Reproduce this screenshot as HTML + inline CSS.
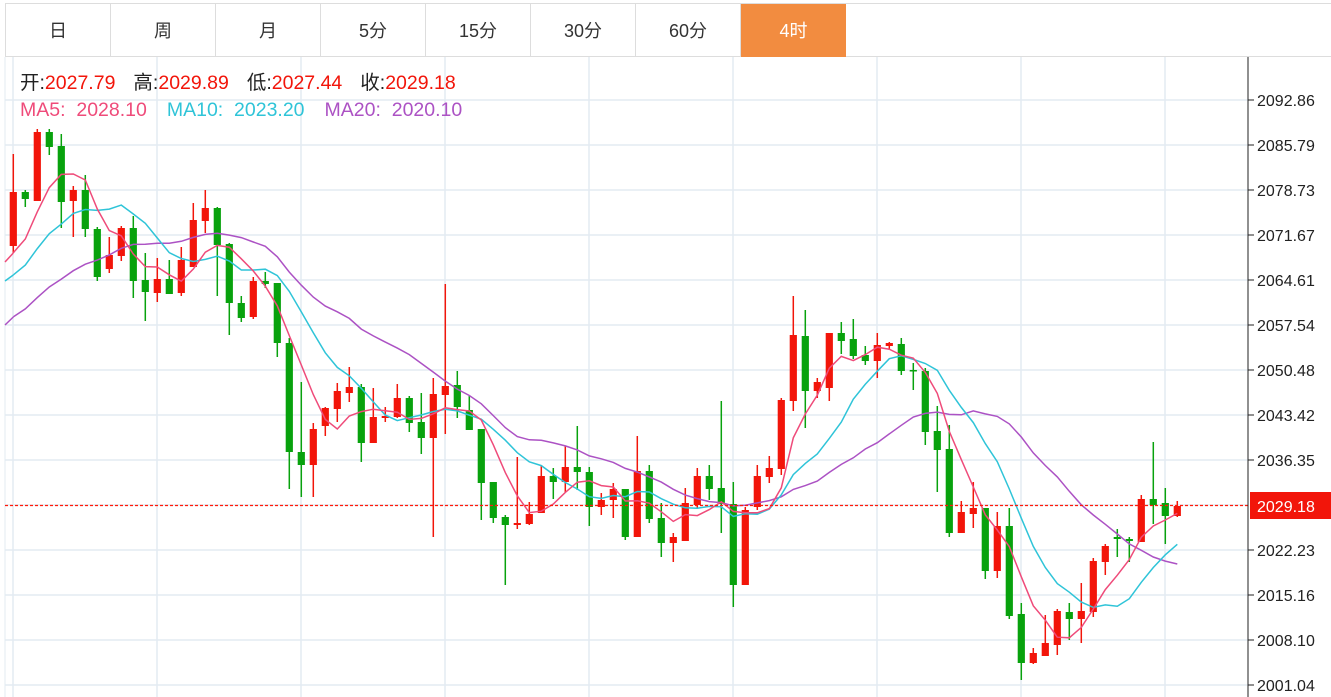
<!DOCTYPE html>
<html><head><meta charset="utf-8">
<style>
body{margin:0;background:#fff;width:1331px;height:697px;overflow:hidden;font-family:"Liberation Sans","Noto Sans CJK SC",sans-serif;}
.tabs{position:absolute;left:5px;top:3px;height:54px;width:1326px;border-top:1px solid #ddd;border-bottom:1px solid #ddd;border-left:1px solid #ddd;box-sizing:border-box;}
.tab{position:absolute;top:0;height:53px;width:105px;border-right:1px solid #ddd;box-sizing:border-box;text-align:center;line-height:54px;font-size:18px;color:#333;}
.tab.on{background:#f28c40;color:#fff;border-right:none}
</style></head><body>
<div class="tabs">
<div class="tab" style="left:0">日</div>
<div class="tab" style="left:105px">周</div>
<div class="tab" style="left:210px">月</div>
<div class="tab" style="left:315px">5分</div>
<div class="tab" style="left:420px">15分</div>
<div class="tab" style="left:525px">30分</div>
<div class="tab" style="left:630px">60分</div>
<div class="tab on" style="left:735px;top:0;height:53px">4时</div>
</div>
<svg id="c" width="1331" height="697" style="position:absolute;left:0;top:0" xmlns="http://www.w3.org/2000/svg"></svg>
<script>
var c=[
['r',192,246,154,253],['g',192,199,190,207],['r',132,201,129,201],['g',132,147,129,155],['g',146,202,134,228],
['r',190,201,186,237],['g',190,229,175,237],['g',229,277,227,281],['r',255,269,237,273],['r',228,256,226,261],
['g',228,281,216,298],['g',280,292,253,321],['r',279,293,258,302],['g',279,294,260,294],['r',260,293,247,296],
['r',220,267,203,267],['r',208,221,190,233],['g',208,245,207,296],['g',244,303,243,335],['g',303,318,296,322],
['r',281,317,277,319],['g',281,284,272,288],['g',283,343,283,357],['g',343,452,338,489],['g',452,465,382,497],
['r',429,465,423,497],['r',408,426,407,436],['r',391,409,383,422],['r',387,393,367,402],['g',387,443,384,462],
['r',417,443,388,443],['r',416,418,407,422],['r',398,417,384,418],['g',398,423,396,432],['g',422,438,393,454],
['r',394,438,378,537],['r',386,395,284,434],['g',385,407,371,418],['g',410,430,396,430],['g',429,483,429,520],
['g',482,518,482,523],['g',517,525,515,585],['r',523,525,457,529],['r',514,524,502,525],['r',476,513,465,513],
['g',476,482,468,499],['r',467,482,446,492],['g',467,472,426,490],['g',472,507,467,526],['r',500,507,493,515],
['r',489,500,483,518],['g',489,537,489,540],['r',471,537,436,537],['g',471,519,465,523],['g',518,543,503,557],
['r',537,543,533,562],['r',503,541,488,541],['r',476,505,468,508],['g',476,489,465,500],['g',488,504,401,533],
['g',504,585,482,607],['r',510,585,507,585],['r',476,507,465,510],['r',468,477,456,483],['r',400,469,398,475],
['r',335,401,296,411],['g',336,391,310,428],['r',382,391,378,398],['r',333,388,333,401],['g',333,341,322,354],
['g',339,356,319,359],['g',355,361,346,365],['r',345,361,333,378],['r',343,346,342,350],['g',344,371,338,375],
['g',370,371,363,390],['g',371,432,368,445],['g',431,450,406,492],['g',449,533,425,537],['r',512,533,501,533],
['r',508,514,482,528],['g',508,571,508,579],['r',526,571,512,578],['g',526,616,508,619],['g',614,663,603,680],
['r',653,663,648,664],['r',643,656,615,656],['r',611,645,609,655],['g',612,619,603,640],['r',611,619,583,643],
['r',561,612,558,617],['r',546,562,544,575],['g',537,539,529,557],['g',539,541,537,562],['r',499,542,495,542],
['g',499,505,442,524],['g',503,516,488,544],['r',506,516,501,517]];
var s='';
s+='<rect x="5" y="57" width="1243" height="640" fill="#fff"/>';
[100,145,190,235,280,325,370,415,460,505,550,595,640,685].forEach(function(y){s+='<line x1="5" x2="1248" y1="'+y+'" y2="'+y+'" stroke="#e3ebf2" stroke-width="1.5"/>';});
for(var x=13;x<1248;x+=144)s+='<line x1="'+x+'" x2="'+x+'" y1="57" y2="697" stroke="#e3ebf2" stroke-width="1.5"/>';
s+='<line x1="5" x2="5" y1="57" y2="697" stroke="#e3ebf2" stroke-width="1"/>';
var closes=[];for(var i=0;i<10;i++)closes.push(359);for(i=0;i<5;i++)closes.push(297);for(i=0;i<4;i++)closes.push(268);
c.forEach(function(k){closes.push(k[0]=='r'?k[1]:k[2]);});
function ma(n,col){var p=[];for(var j=19;j<closes.length;j++){var t=0;for(var q=0;q<n;q++)t+=closes[j-q];p.push(((13.3+12*(j-19)).toFixed(1))+','+(t/n).toFixed(1));}
 return '<polyline points="'+p.join(' ')+'" fill="none" stroke="'+col+'" stroke-width="1.5"/>';}
c.forEach(function(k,i){var x=13.3+12*i;var col=k[0]=='r'?'#f2150a':'#08a20d';
 s+='<line x1="'+x+'" x2="'+x+'" y1="'+k[3]+'" y2="'+k[4]+'" stroke="'+col+'" stroke-width="1.5"/>';
 s+='<rect x="'+(x-3.6)+'" y="'+k[1]+'" width="7.2" height="'+Math.max(1.5,k[2]-k[1])+'" fill="'+col+'"/>';});
s+=ma(20,'#ac52c4')+ma(10,'#2fc4d8')+ma(5,'#ef4b7a');
s+='<line x1="5" y1="262" x2="13.3" y2="253" stroke="#ef4b7a" stroke-width="1.5"/>';
s+='<line x1="5" y1="281" x2="13.3" y2="275" stroke="#2fc4d8" stroke-width="1.5"/>';
s+='<line x1="5" y1="325" x2="13.3" y2="317" stroke="#ac52c4" stroke-width="1.5"/>';
s+='<line x1="5" x2="1248" y1="505.5" y2="505.5" stroke="#ff1a0a" stroke-width="1.3" stroke-dasharray="3,2"/>';
s+='<line x1="1248" x2="1248" y1="57" y2="697" stroke="#222" stroke-width="1"/>';
var labs=['2092.86','2085.79','2078.73','2071.67','2064.61','2057.54','2050.48','2043.42','2036.35',null,'2022.23','2015.16','2008.10','2001.04'];
labs.forEach(function(l,i){var y=100+45*i;if(!l)return;s+='<line x1="1248" x2="1254" y1="'+y+'" y2="'+y+'" stroke="#222"/><text x="1257" y="'+(y+6)+'" font-size="16" fill="#222" font-family="Liberation Sans,sans-serif">'+l+'</text>';});
s+='<rect x="1250" y="492" width="81" height="27" fill="#f2150a"/><text x="1257" y="512" font-size="16" fill="#fff" font-family="Liberation Sans,sans-serif">2029.18</text>';
var f='font-size="19.5" font-family="Liberation Sans,Noto Sans CJK SC,sans-serif"';
s+='<text x="20" y="89" '+f+'><tspan fill="#222">开:</tspan><tspan fill="#f2150a">2027.79</tspan><tspan fill="#222" dx="18">高:</tspan><tspan fill="#f2150a">2029.89</tspan><tspan fill="#222" dx="18">低:</tspan><tspan fill="#f2150a">2027.44</tspan><tspan fill="#222" dx="18">收:</tspan><tspan fill="#f2150a">2029.18</tspan></text>';
s+='<text x="20" y="116" '+f+' xml:space="preserve"><tspan fill="#ef4b7a">MA5:  2028.10</tspan><tspan fill="#2fc4d8" dx="20">MA10:  2023.20</tspan><tspan fill="#ac52c4" dx="20">MA20:  2020.10</tspan></text>';
document.getElementById('c').innerHTML=s;
</script>
</body></html>
